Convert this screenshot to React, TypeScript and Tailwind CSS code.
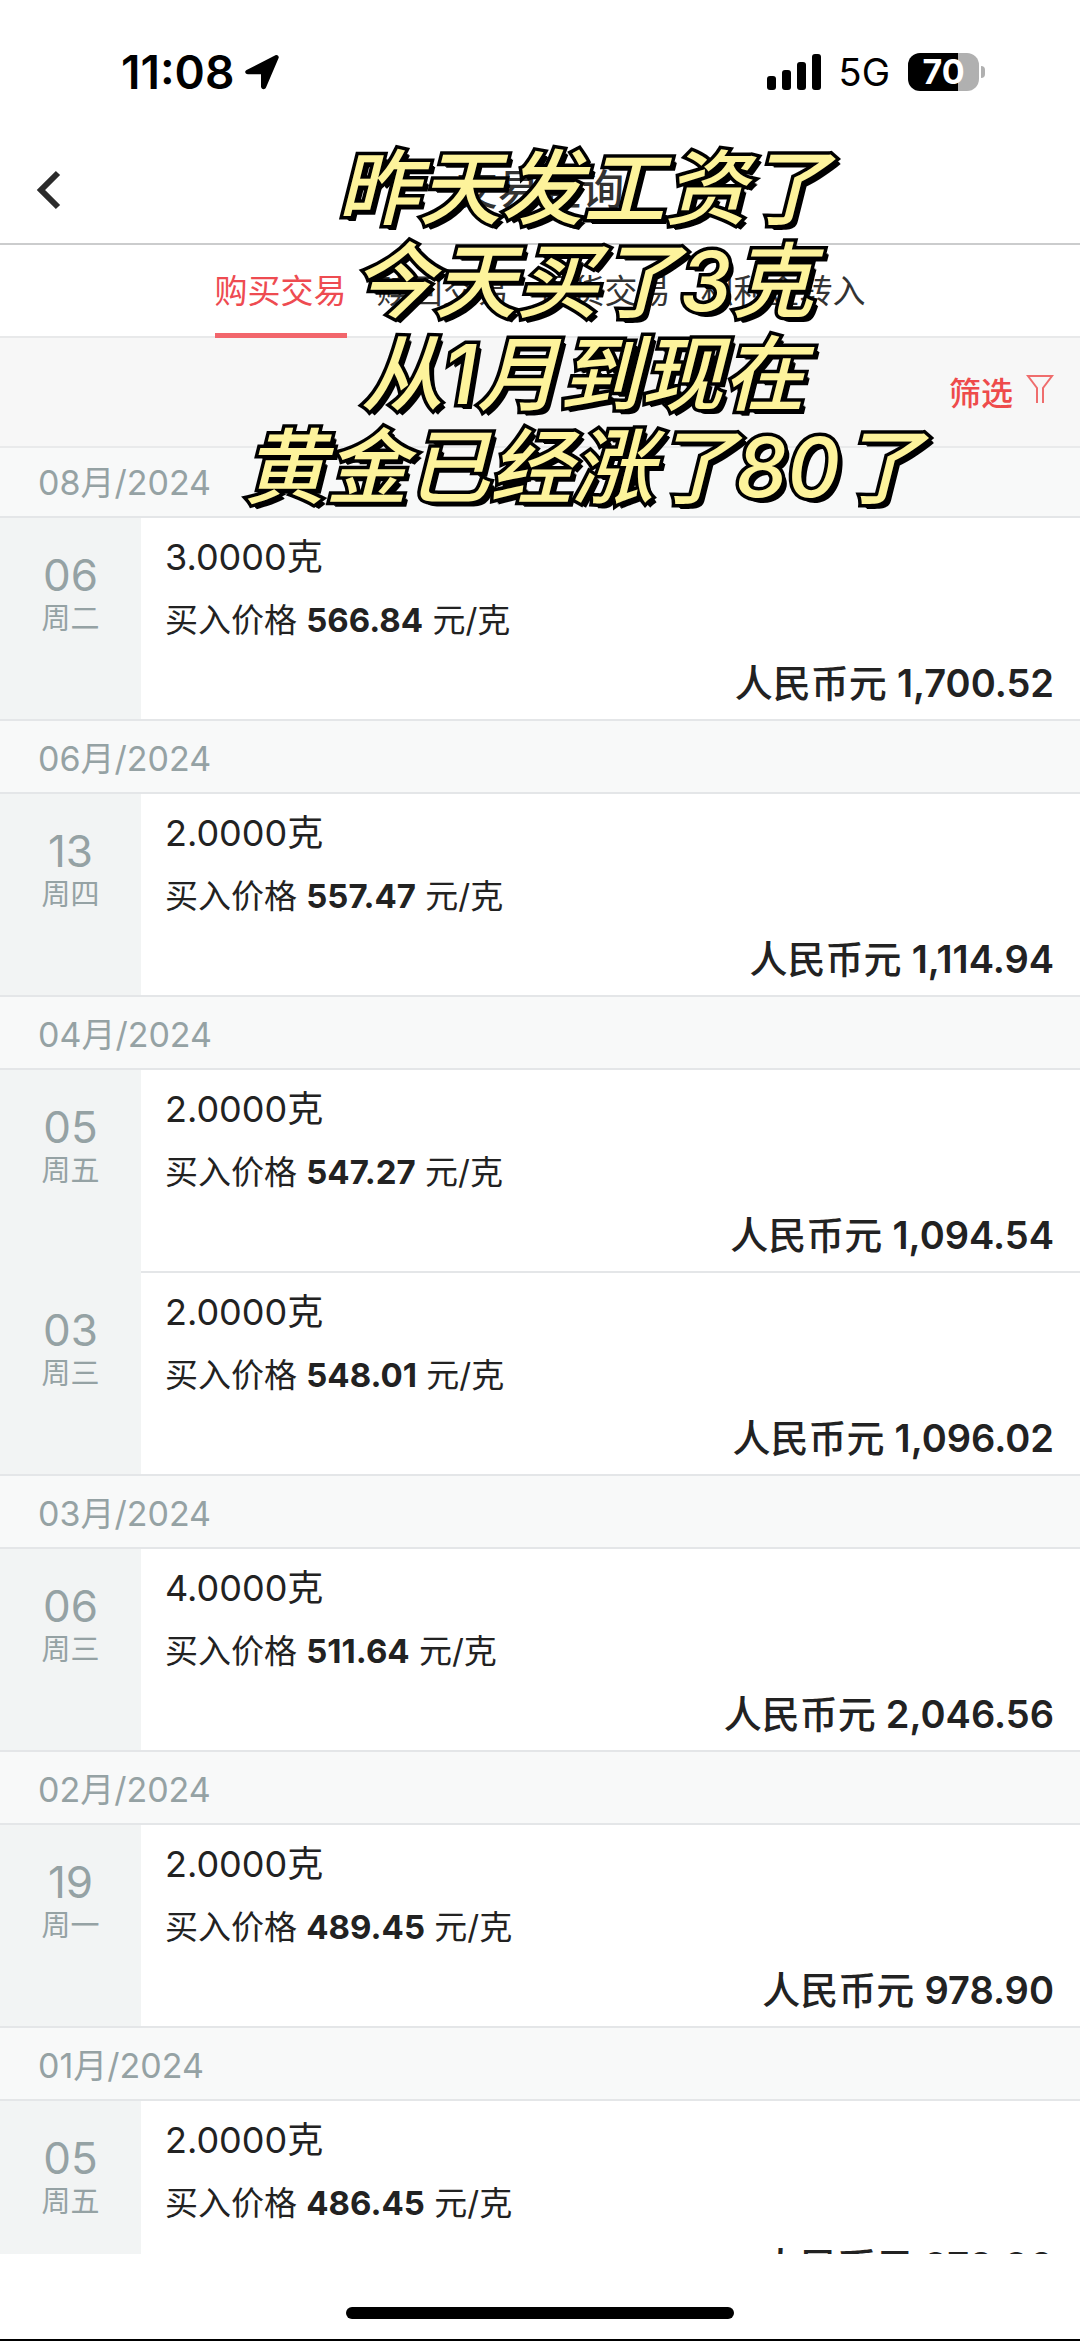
import { useState } from "react";

type Trade = { day: string; week: string; grams: string; price: string; total: string };
type Month = { label: string; trades: Trade[] };

const TABS = ["购买交易", "赎回交易", "提货交易", "积利金转入"];

const CAPTION = ["昨天发工资了", "今天买了3克", "从1月到现在", "黄金已经涨了80了"];

const MONTHS: Month[] = [
  { label: "08月/2024", trades: [{ day: "06", week: "周二", grams: "3.0000", price: "566.84", total: "1,700.52" }] },
  { label: "06月/2024", trades: [{ day: "13", week: "周四", grams: "2.0000", price: "557.47", total: "1,114.94" }] },
  {
    label: "04月/2024",
    trades: [
      { day: "05", week: "周五", grams: "2.0000", price: "547.27", total: "1,094.54" },
      { day: "03", week: "周三", grams: "2.0000", price: "548.01", total: "1,096.02" },
    ],
  },
  { label: "03月/2024", trades: [{ day: "06", week: "周三", grams: "4.0000", price: "511.64", total: "2,046.56" }] },
  { label: "02月/2024", trades: [{ day: "19", week: "周一", grams: "2.0000", price: "489.45", total: "978.90" }] },
  { label: "01月/2024", trades: [{ day: "05", week: "周五", grams: "2.0000", price: "486.45", total: "972.90" }] },
];

function StatusBar() {
  return (
    <div className="flex h-36 shrink-0 items-center justify-between pl-[121px] pr-[95px] text-black">
      <div className="flex items-center gap-[10px]">
        <span className="text-[46px] font-semibold leading-none">11:08</span>
        <svg className="h-9 w-9" viewBox="0 0 36 36" aria-hidden="true">
          <path
            d="M2.600 16 31.400 1.200c2-1 4.100 1 3.100 3.100L22 33.600c-1.100 2.600-5 1.900-5-1V20.200H4c-3 0-3.800-3-1.400-4.200Z"
            fill="currentColor"
          />
        </svg>
      </div>
      <div className="flex items-center">
        <svg className="h-9 w-14" viewBox="0 0 56 36" fill="currentColor" aria-hidden="true">
          <rect x="0" y="22" width="9" height="14" rx="3" />
          <rect x="15" y="16" width="9" height="20" rx="3" />
          <rect x="30" y="8" width="9" height="28" rx="3" />
          <rect x="45" y="0" width="9" height="36" rx="3" />
        </svg>
        <span className="ml-4 text-[38px] leading-none">5G</span>
        <div className="ml-[18px] flex items-center gap-[2px]">
          <div className="flex h-[38px] w-[71px] items-center justify-center rounded-xl bg-linear-to-r from-black from-70% to-[#b0b0b0] to-70% text-[34px] font-bold leading-none text-white">
            70
          </div>
          <div className="h-3 w-1 rounded-r-full bg-[#b0b0b0]" />
        </div>
      </div>
    </div>
  );
}

function TradeRow({ trade, last }: { trade: Trade; last: boolean }) {
  return (
    <li className={last ? "flex border-b-2 border-[#e4e6e8]" : "flex"}>
      <div className="w-[141px] shrink-0 bg-[#f2f4f4] pt-9 text-center text-[#95a2a4]">
        <p className="text-[44px] leading-[43px]">{trade.day}</p>
        <p className="text-[29px] leading-[43px]">{trade.week}</p>
      </div>
      <div className={last ? "flex-1 pb-1 pl-6 pr-[26px] pt-2" : "flex-1 border-b-2 border-[#e4e6e8] pb-1 pl-6 pr-[26px] pt-2"}>
        <p className="text-[36px] leading-[63px]">{trade.grams}克</p>
        <p className="text-[33px] leading-[63px]">
          买入价格 <b className="font-bold">{trade.price}</b> 元/克
        </p>
        <p className="text-right text-[38px] font-medium leading-[63px]">
          人民币元 <span className="font-semibold">{trade.total}</span>
        </p>
      </div>
    </li>
  );
}

export default function App() {
  const [tab, setTab] = useState(0);

  return (
    <div className="relative flex h-screen flex-col overflow-hidden border-b-2 border-black bg-white font-[Inter,'Noto_Sans_CJK_SC',sans-serif] text-[#222]">
      <StatusBar />

      <header className="relative flex h-[101px] shrink-0 items-center justify-center border-b-2 border-[#cbcccd] pb-2">
        <button type="button" aria-label="返回" className="absolute left-9 text-[#2b2b2b]">
          <svg className="h-10 w-7" viewBox="0 0 28 40" fill="none" stroke="currentColor" strokeWidth="6" aria-hidden="true">
            <path d="M22 3 5 20l17 17" />
          </svg>
        </button>
        <h1 className="text-[42px] font-medium leading-none text-[#333]">交易查询</h1>
      </header>

      <nav className="flex h-[93px] shrink-0 justify-center gap-[30px] border-b-2 border-[#e8e9ea]">
        {TABS.map((name, i) => (
          <button
            key={name}
            type="button"
            onClick={() => setTab(i)}
            className={i === tab ? "relative pt-[2px] text-[33px] text-[#ee4b51]" : "relative pt-[2px] text-[33px] text-[#333]"}
          >
            {name}
            {i === tab && <span className="absolute inset-x-0 -bottom-[2px] h-[5px] bg-[#f2666c]" />}
          </button>
        ))}
      </nav>

      <div className="relative z-10 -mb-[3px] flex h-[110px] shrink-0 items-center justify-end border-b-2 border-[#e9eaeb] bg-[#f7f7f7] pr-[26px]">
        <button type="button" className="flex items-start gap-[13px] text-[#ee4b4b]">
          <span className="pt-1 text-[32px] font-medium leading-8">筛选</span>
          <svg className="h-[30px] w-7" viewBox="0 0 28 30" fill="none" stroke="currentColor" strokeWidth="2" opacity="0.8" aria-hidden="true">
            <path d="M11 29V14L2 2h24l-9 12v15" />
          </svg>
        </button>
      </div>

      <main className="min-h-0 flex-1 overflow-y-auto [scrollbar-width:none]">
        {MONTHS.map((m) => (
          <section key={m.label}>
            <h2 className="flex h-[73px] items-center border-b-2 border-[#e4e6e8] bg-[#f8f9f9] pl-[38px] pt-[5px] text-[34px] leading-none text-[#95a2a4]">
              {m.label}
            </h2>
            <ul>
              {m.trades.map((t, i) => (
                <TradeRow key={t.day} trade={t} last={i === m.trades.length - 1} />
              ))}
            </ul>
          </section>
        ))}
      </main>

      <footer className="flex h-[85px] shrink-0 justify-center bg-white pt-[53px]">
        <div className="h-3 w-[36%] rounded-full bg-black" />
      </footer>

      {/* caption laid over the top of the page */}
      <div className="pointer-events-none absolute inset-x-0 top-[142px] z-20 pl-[86px] text-center text-[82px] font-medium italic leading-[93px] text-[#fdf39b] [-webkit-text-stroke:7px_black] [paint-order:stroke_fill] [text-shadow:1px_1px_0_black,2px_2px_0_black,4px_4px_0_black,5px_5px_0_black]">
        {CAPTION.map((line) => (
          <p key={line}>{line}</p>
        ))}
      </div>
    </div>
  );
}
